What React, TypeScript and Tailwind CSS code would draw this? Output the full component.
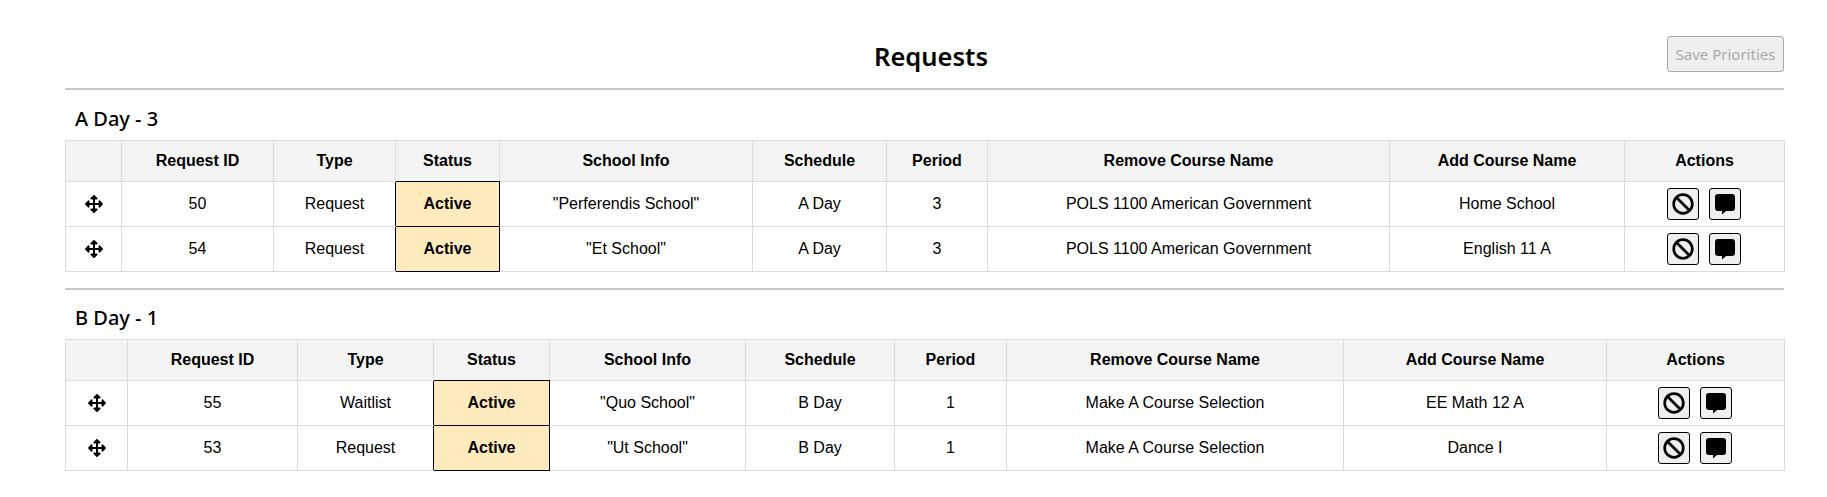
import { FaArrowsAlt, FaBan } from "react-icons/fa";

type Row = {
  id: number;
  type: string;
  school: string;
  schedule: string;
  period: number;
  remove: string;
  add: string;
};

const headers = [
  "",
  "Request ID",
  "Type",
  "Status",
  "School Info",
  "Schedule",
  "Period",
  "Remove Course Name",
  "Add Course Name",
  "Actions",
];

const aDay: Row[] = [
  { id: 50, type: "Request", school: '"Perferendis School"', schedule: "A Day", period: 3, remove: "POLS 1100 American Government", add: "Home School" },
  { id: 54, type: "Request", school: '"Et School"', schedule: "A Day", period: 3, remove: "POLS 1100 American Government", add: "English 11 A" },
];

const bDay: Row[] = [
  { id: 55, type: "Waitlist", school: '"Quo School"', schedule: "B Day", period: 1, remove: "Make A Course Selection", add: "EE Math 12 A" },
  { id: 53, type: "Request", school: '"Ut School"', schedule: "B Day", period: 1, remove: "Make A Course Selection", add: "Dance I" },
];

function CommentIcon() {
  return (
    <svg viewBox="0 0 20 21" className="h-[21px] w-5" fill="currentColor">
      <path d="M3 0h14a3 3 0 0 1 3 3v11a3 3 0 0 1-3 3h-6l-4 3.5V17H3a3 3 0 0 1-3-3V3a3 3 0 0 1 3-3z" />
    </svg>
  );
}

function IconButton({ children }: { children: React.ReactNode }) {
  return (
    <button className="flex h-8 w-8 items-center justify-center rounded-[3px] border border-black bg-[#efefef] text-black">
      {children}
    </button>
  );
}

function RequestTable({ rows, widths }: { rows: Row[]; widths: number[] }) {
  return (
    <table className="w-full table-fixed border-collapse text-center text-base text-black [font-family:'Liberation_Sans',Arial,sans-serif]">
      <colgroup>
        {widths.map((w, i) => (
          <col key={i} style={{ width: w }} />
        ))}
      </colgroup>
      <thead>
        <tr className="h-[41px] bg-[#f4f4f4]">
          {headers.map((h, i) => (
            <th
              key={i}
              className={
                i === 3
                  ? "border border-[#dcdcdc] border-b-black p-0 font-bold"
                  : "border border-[#dcdcdc] p-0 font-bold"
              }
            >
              {h}
            </th>
          ))}
        </tr>
      </thead>
      <tbody>
        {rows.map((r) => (
          <tr key={r.id} className="h-[45px]">
            <td className="border border-[#dcdcdc] p-0">
              <FaArrowsAlt className="mx-auto text-lg" />
            </td>
            <td className="border border-[#dcdcdc] p-0">{r.id}</td>
            <td className="border border-[#dcdcdc] border-r-black p-0">{r.type}</td>
            <td className="border border-black bg-[#ffeabd] p-0 font-bold">Active</td>
            <td className="border border-[#dcdcdc] p-0">{r.school}</td>
            <td className="border border-[#dcdcdc] p-0">{r.schedule}</td>
            <td className="border border-[#dcdcdc] p-0">{r.period}</td>
            <td className="border border-[#dcdcdc] p-0">{r.remove}</td>
            <td className="border border-[#dcdcdc] p-0">{r.add}</td>
            <td className="border border-[#dcdcdc] p-0">
              <div className="flex justify-center gap-2.5 pr-px">
                <IconButton>
                  <FaBan className="text-[22px]" />
                </IconButton>
                <IconButton>
                  <CommentIcon />
                </IconButton>
              </div>
            </td>
          </tr>
        ))}
      </tbody>
    </table>
  );
}

export default function App() {
  return (
    <div className="min-h-[497px] bg-white pr-[43px] pl-[65px] text-black [font-family:'Noto_Sans','Open_Sans',sans-serif]">
      <div className="flex h-[88px] items-center pt-[24px]">
        <h1 className="flex-1 pl-[130px] text-center text-[25.5px] font-semibold">Requests</h1>
        <button
          disabled
          className="mb-[4px] h-[36px] w-[117px] rounded-[3px] border border-[#a8a8a8] bg-[#efefef] text-[15px] text-[#a9a9a9]"
        >
          Save Priorities
        </button>
      </div>
      <hr className="border-t-2 border-[#c8c8c8]" />
      <h2 className="flex h-[50px] items-center pt-[7px] pl-2.5 text-xl font-medium">A Day - 3</h2>
      <RequestTable rows={aDay} widths={[56, 152, 122, 104, 253, 134, 101, 402, 235, 160]} />
      <hr className="mt-[16px] border-t-2 border-[#c8c8c8]" />
      <h2 className="flex h-[49px] items-center pt-[7px] pl-2.5 text-xl font-medium">B Day - 1</h2>
      <RequestTable rows={bDay} widths={[62, 170, 136, 116, 196, 149, 112, 337, 263, 178]} />
    </div>
  );
}
